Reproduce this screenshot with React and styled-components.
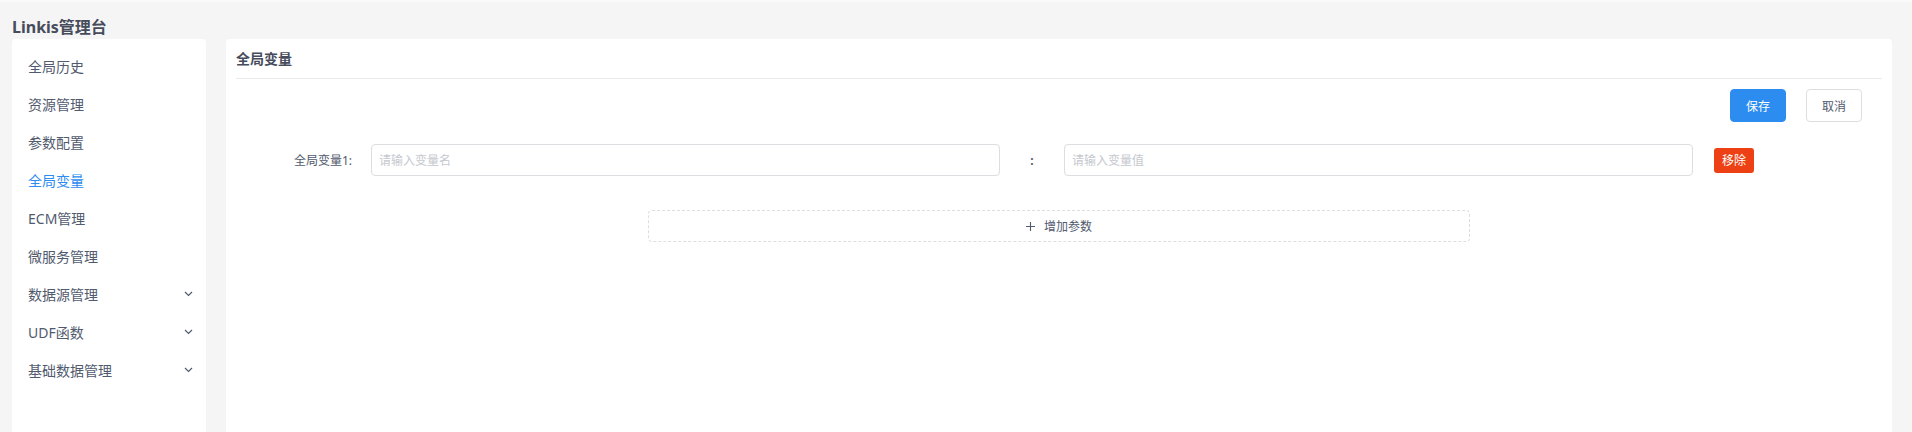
import React from "react";
import styled, { createGlobalStyle } from "styled-components";

const GlobalStyle = createGlobalStyle`
  html, body {
    margin: 0;
    padding: 0;
    background: #f5f5f5;
  }
  body {
    font-family: "Noto Sans", "Noto Sans CJK SC", sans-serif;
    color: #515a6e;
  }
  * {
    box-sizing: border-box;
  }
`;

const Page = styled.div`
  height: 432px;
  display: flex;
  flex-direction: column;
  border-top: 2px solid #fafafa;
  overflow: hidden;
`;

const TopTitle = styled.h1`
  margin: 0;
  padding: 15px 0 0 12px;
  height: 37px;
  font-size: 16px;
  line-height: 20px;
  font-weight: 700;
  color: #464c5b;
`;

const Body = styled.div`
  flex: 1;
  display: flex;
  gap: 20px;
  padding: 0 20px 0 12px;
`;

const Sidebar = styled.nav`
  width: 194px;
  background: #fff;
  border-radius: 4px 4px 0 0;
  padding-top: 8px;
`;

const MenuItem = styled.div`
  height: 38px;
  display: flex;
  align-items: center;
  justify-content: space-between;
  padding: 0 13px 0 16px;
  font-size: 14px;
  color: ${(p) => (p.$active ? "#2d8cf0" : "#515a6e")};
  cursor: pointer;
`;

const Main = styled.main`
  flex: 1;
  background: #fff;
  border-radius: 4px 4px 0 0;
  padding: 9px 10px 0;
`;

const CardTitle = styled.div`
  font-size: 14px;
  line-height: 22px;
  font-weight: 600;
  color: #464c5b;
  padding-bottom: 8px;
  border-bottom: 1px solid #e8eaec;
`;

const Actions = styled.div`
  display: flex;
  justify-content: flex-end;
  gap: 20px;
  padding: 10px 20px 0 0;
`;

const Button = styled.button`
  width: 56px;
  height: 33px;
  border-radius: 4px;
  font-family: inherit;
  font-size: 12px;
  cursor: pointer;
  border: 1px solid ${(p) => (p.$primary ? "#2d8cf0" : "#dcdee2")};
  background: ${(p) => (p.$primary ? "#2d8cf0" : "#fff")};
  color: ${(p) => (p.$primary ? "#fff" : "#515a6e")};
`;

const Row = styled.div`
  display: flex;
  align-items: center;
  margin-top: 22px;
`;

const Label = styled.label`
  width: 116px;
  text-align: right;
  font-size: 12px;
  color: #515a6e;
  margin-right: 19px;
`;

const Input = styled.input`
  width: 629px;
  height: 32px;
  border: 1px solid #dcdee2;
  border-radius: 4px;
  padding: 0 7px;
  font-family: inherit;
  font-size: 12px;
  color: #515a6e;
  outline: none;
  &::placeholder {
    color: #c5c8ce;
  }
`;

const Colon = styled.span`
  width: 64px;
  text-align: center;
  font-size: 12px;
  font-weight: 700;
  color: #515a6e;
`;

const RemoveButton = styled.button`
  margin-left: 21px;
  width: 40px;
  height: 25px;
  border: none;
  border-radius: 3px;
  background: #ed4014;
  color: #fff;
  font-family: inherit;
  font-size: 12px;
  cursor: pointer;
`;

const AddButton = styled.button`
  display: flex;
  align-items: center;
  justify-content: center;
  gap: 9px;
  width: 822px;
  height: 32px;
  margin: 34px auto 0;
  border: 1px dashed #dcdee2;
  border-radius: 4px;
  background: #fff;
  font-family: inherit;
  font-size: 12px;
  color: #515a6e;
  cursor: pointer;
`;

const Chevron = () => (
  <svg width="9" height="6" viewBox="0 0 9 6" fill="none">
    <path d="M1 1l3.5 3.5L8 1" stroke="#515a6e" strokeWidth="1.2" />
  </svg>
);

const Plus = () => (
  <svg width="9" height="9" viewBox="0 0 9 9" fill="none">
    <path d="M4.5 0v9M0 4.5h9" stroke="#515a6e" strokeWidth="1.1" />
  </svg>
);

const menu = [
  { name: "全局历史" },
  { name: "资源管理" },
  { name: "参数配置" },
  { name: "全局变量", active: true },
  { name: "ECM管理" },
  { name: "微服务管理" },
  { name: "数据源管理", sub: true },
  { name: "UDF函数", sub: true },
  { name: "基础数据管理", sub: true },
];

const App = () => {
  return (
    <Page>
      <GlobalStyle />
      <TopTitle>Linkis管理台</TopTitle>
      <Body>
        <Sidebar>
          {menu.map((m) => (
            <MenuItem key={m.name} $active={m.active}>
              <span>{m.name}</span>
              {m.sub && <Chevron />}
            </MenuItem>
          ))}
        </Sidebar>
        <Main>
          <CardTitle>全局变量</CardTitle>
          <Actions>
            <Button $primary>保存</Button>
            <Button>取消</Button>
          </Actions>
          <Row>
            <Label>全局变量1:</Label>
            <Input placeholder="请输入变量名" />
            <Colon>:</Colon>
            <Input placeholder="请输入变量值" />
            <RemoveButton>移除</RemoveButton>
          </Row>
          <AddButton>
            <Plus />
            <span>增加参数</span>
          </AddButton>
        </Main>
      </Body>
    </Page>
  );
};

export default App;
